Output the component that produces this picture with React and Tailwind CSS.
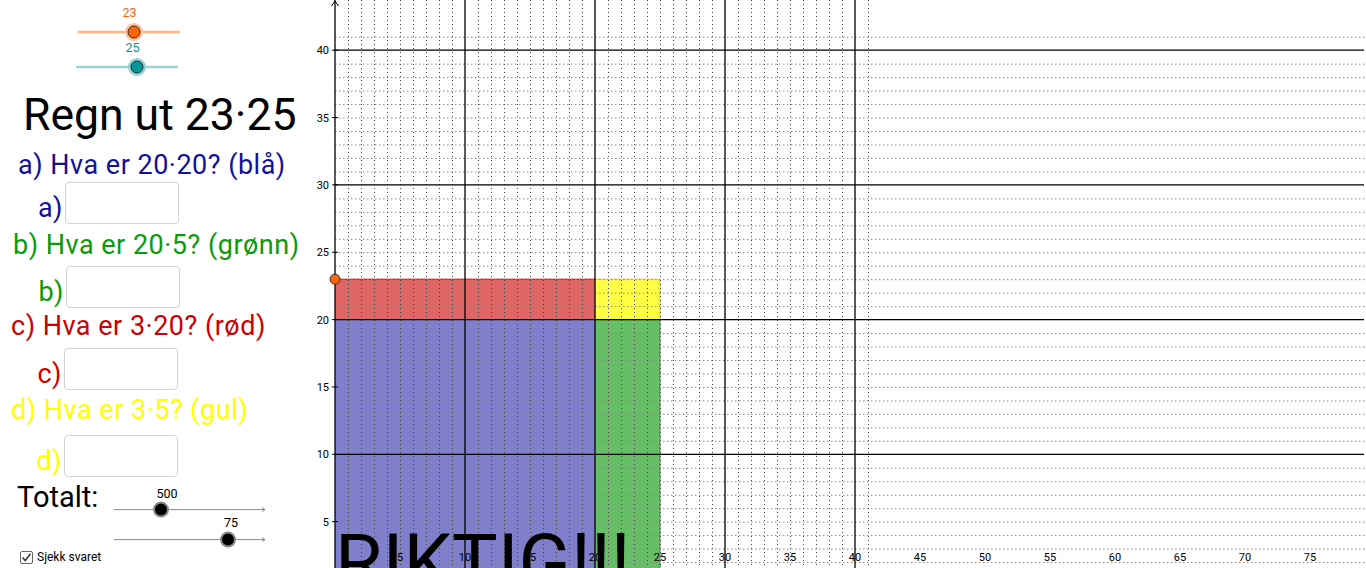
import React from "react";

const OX = 25;
const OY = 589;
const SX = 13;
const SY = 13.47;
const W = 1056;
const H = 568;

const px = (v) => OX + v * SX;
const py = (v) => OY - v * SY;

function TopSliders() {
  return (
    <svg width="310" height="80" viewBox="0 0 310 80">
      <line x1="78" y1="32" x2="180" y2="32" stroke="#ffb584" strokeWidth="2.5" />
      <circle cx="134" cy="32" r="9" fill="#ffbf94" />
      <circle cx="134" cy="32" r="6" fill="#ff6600" stroke="#2a2a2a" strokeWidth="1" />
      <text x="129.5" y="17" fontSize="12.5" textAnchor="middle" fill="#ff6600">23</text>

      <line x1="76" y1="67" x2="178" y2="67" stroke="#9ad6d6" strokeWidth="2.5" />
      <circle cx="137" cy="67" r="9" fill="#96d2d2" />
      <circle cx="137" cy="67" r="6" fill="#009999" stroke="#2a2a2a" strokeWidth="1" />
      <text x="132.5" y="52" fontSize="12.5" textAnchor="middle" fill="#009999">25</text>
    </svg>
  );
}

function BottomSliders() {
  return (
    <svg width="180" height="68" viewBox="0 0 180 68">
      <line x1="14" y1="28.6" x2="165" y2="28.6" stroke="#8a8a8a" strokeWidth="1" />
      <path d="M162 26.6 L165 28.6 L162 30.6" fill="none" stroke="#8a8a8a" strokeWidth="1" />
      <circle cx="61" cy="28.6" r="7" fill="#000" stroke="#8a8a8a" strokeWidth="2" />
      <text x="67" y="16.6" fontSize="12.5" textAnchor="middle" fill="#000">500</text>

      <line x1="14" y1="58.6" x2="165" y2="58.6" stroke="#8a8a8a" strokeWidth="1" />
      <path d="M162 56.6 L165 58.6 L162 60.6" fill="none" stroke="#8a8a8a" strokeWidth="1" />
      <circle cx="128" cy="58.6" r="7" fill="#000" stroke="#8a8a8a" strokeWidth="2" />
      <text x="131" y="45.6" fontSize="12.5" textAnchor="middle" fill="#000">75</text>
    </svg>
  );
}

function AnswerRow({ label, color, left, className }) {
  return (
    <div className={"flex items-end h-[42px] " + className}>
      <div
        className={"text-[27px] leading-[30px] tracking-[0.5px] text-right pr-[2px] mb-[1px] " + color}
        style={{ width: left }}
      >
        {label}
      </div>
      <div className="w-[114px] h-[42px] border border-[#d2d2d2] rounded-[4px] bg-white" />
    </div>
  );
}

function Graph() {
  const vDots = [];
  const hDots = [];
  for (let i = 1; i <= 41; i++) {
    if (i % 10 !== 0) {
      vDots.push(
        <line key={"v" + i} x1={px(i) + 0.5} y1="0" x2={px(i) + 0.5} y2={H} stroke="#444" strokeWidth="1" strokeDasharray="1 3" />
      );
      hDots.push(
        <line key={"h" + i} x1={OX} y1={py(i) + 0.5} x2={W} y2={py(i) + 0.5} stroke="#888" strokeWidth="1" strokeDasharray="1.5 2.5" />
      );
    }
  }
  const solids = [];
  [10, 20, 30, 40].forEach((v) => {
    solids.push(<line key={"sv" + v} x1={px(v)} y1="0" x2={px(v)} y2={H} stroke="#000" strokeWidth="1.3" />);
    solids.push(<line key={"sh" + v} x1={OX} y1={py(v)} x2={W - 2} y2={py(v)} stroke="#000" strokeWidth="1.3" />);
  });
  const yLabels = [5, 10, 15, 20, 25, 30, 35, 40];
  const xLabels = [];
  for (let k = 5; k <= 75; k += 5) xLabels.push(k);

  return (
    <svg width={W} height={H} viewBox={`0 0 ${W} ${H}`}>
      <rect x={OX} y={py(20)} width={20 * SX} height={H - py(20)} fill="#7f7fcc" />
      <rect x={OX} y={py(23)} width={20 * SX} height={3 * SY} fill="#e06666" />
      <line x1={OX} y1={py(23)} x2={px(20)} y2={py(23)} stroke="#cc0000" strokeWidth="1" />
      <rect x={px(20)} y={py(23)} width={5 * SX} height={3 * SY} fill="#ffff44" />
      <line x1={px(20)} y1={py(23)} x2={px(25)} y2={py(23)} stroke="#f2c070" strokeWidth="1" />
      <line x1={px(25)} y1={py(23)} x2={px(25)} y2={py(20)} stroke="#d8c400" strokeWidth="1" />
      <rect x={px(20)} y={py(20)} width={5 * SX} height={H - py(20)} fill="#66bf66" />
      <line x1={px(25)} y1={py(20)} x2={px(25)} y2={H} stroke="#3f8a2f" strokeWidth="1" />

      {hDots}
      {vDots}
      {solids}

      <line x1={OX} y1="0" x2={OX} y2={H} stroke="#000" strokeWidth="1.3" />
      <path d={`M${OX - 3.5} 6 L${OX} 1 L${OX + 3.5} 6`} fill="none" stroke="#000" strokeWidth="1" />
      {yLabels.map((v) => (
        <g key={"yl" + v}>
          <line x1={OX - 3} y1={py(v)} x2={OX + 3} y2={py(v)} stroke="#000" strokeWidth="1" />
          <text x={OX - 6} y={py(v) + 4} fontSize="11" textAnchor="end" fill="#000">
            {v}
          </text>
        </g>
      ))}
      {xLabels.map((v) => (
        <text key={"xl" + v} x={px(v)} y="561" fontSize="11" textAnchor="middle" fill="#000">
          {v}
        </text>
      ))}

      <circle cx={OX} cy={py(23)} r="5" fill="#ff6600" stroke="#333" strokeWidth="1" />

      <text x={OX} y={OY} fontSize="77" fill="#000">
        RIKTIG!!!
      </text>
    </svg>
  );
}

export default function App() {
  return (
    <div className="w-[1366px] h-[568px] overflow-hidden bg-white flex font-['Roboto',sans-serif]">
      <div className="w-[310px] h-[568px] flex flex-col shrink-0">
        <TopSliders />
        <div className="mt-[13px] pl-[23px] text-[44.5px] leading-[44px] text-black whitespace-nowrap">
          Regn ut 23·25
        </div>
        <div className="mt-[13px] pl-[18px] text-[27px] leading-[30px] tracking-[0.5px] text-[#111199] whitespace-nowrap">
          a) Hva er 20·20? (blå)
        </div>
        <AnswerRow label="a)" color="text-[#111199]" left={65} className="mt-[2px]" />
        <div className="mt-[6px] pl-[13px] text-[27px] leading-[30px] tracking-[0.5px] text-[#0a9a0a] whitespace-nowrap">
          b) Hva er 20·5? (grønn)
        </div>
        <AnswerRow label="b)" color="text-[#0a9a0a]" left={66} className="mt-[6px]" />
        <div className="mt-[3px] pl-[11px] text-[27px] leading-[30px] tracking-[0.5px] text-[#cc0000] whitespace-nowrap">
          c) Hva er 3·20? (rød)
        </div>
        <AnswerRow label="c)" color="text-[#cc0000]" left={64} className="mt-[7px]" />
        <div className="mt-[5px] pl-[11px] text-[27px] leading-[30px] tracking-[0.5px] text-[#ffff00] whitespace-nowrap">
          d) Hva er 3·5? (gul)
        </div>
        <AnswerRow label="d)" color="text-[#ffff00]" left={64} className="mt-[10px]" />
        <div className="mt-[4px] flex items-start h-[68px]">
          <div className="w-[100px] pl-[17px] text-[29px] leading-[32px] text-black">Totalt:</div>
          <BottomSliders />
        </div>
        <div className="mt-[1px] pl-[20px] flex items-center gap-[4px] h-[14px]">
          <div className="w-[13px] h-[13px] border border-[#666] rounded-[2px] bg-white flex items-center justify-center">
            <svg width="11" height="11" viewBox="0 0 11 11">
              <path d="M1.5 5.5 L4.2 8.5 L9.5 1.8" fill="none" stroke="#333" strokeWidth="1.5" />
            </svg>
          </div>
          <span className="text-[12px] leading-[14px] text-black">Sjekk svaret</span>
        </div>
      </div>
      <Graph />
    </div>
  );
}
